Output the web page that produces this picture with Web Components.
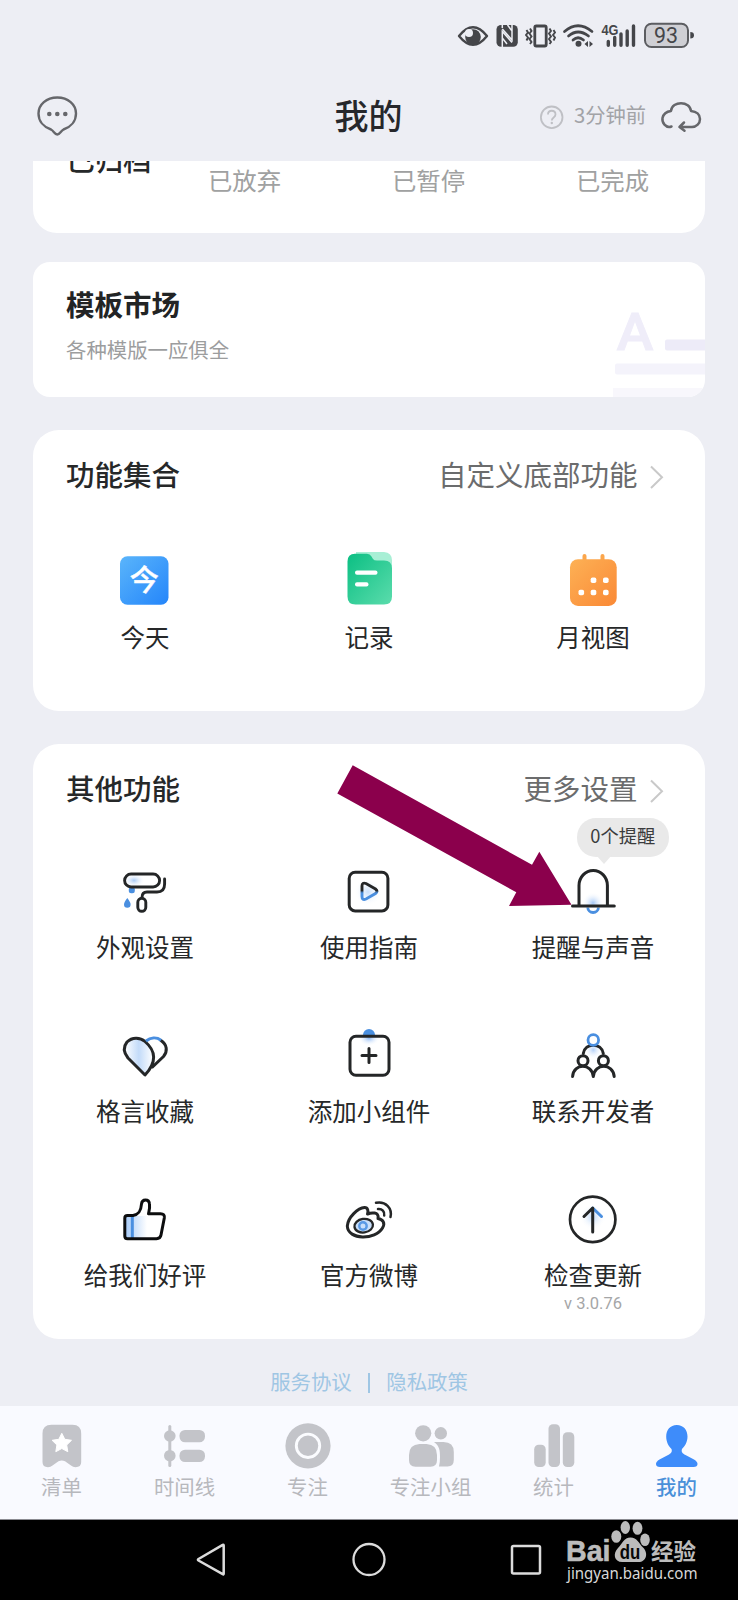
<!DOCTYPE html>
<html lang="zh-CN">
<head>
<meta charset="utf-8">
<title>我的</title>
<style>
html,body{margin:0;padding:0}
body{width:738px;height:1600px;overflow:hidden;background:#edeef4;color:#262829;font-family:"Noto Sans CJK SC",sans-serif}
</style>
</head>
<body>
<mine-page></mine-page>
<script>
const INK = 'fill="none" stroke="#242627" stroke-width="3" stroke-linecap="round" stroke-linejoin="round"';
const BLUE = '#4a8fe0';
// Each entry: [viewBox, markup]
const ICONS = {
  status: ['450 15 250 40', `<g fill="#45464a" stroke="none">
    <path d="M459 36Q473 18.500 487 36Q473 53.500 459 36Z" fill="none" stroke="#45464a" stroke-width="2.400" stroke-linejoin="round"/>
    <circle cx="473" cy="37" r="7.800"/><circle cx="469" cy="33" r="4" fill="#edeef4"/>
    <rect x="496.500" y="25" width="21.300" height="21.800" rx="4.500"/>
    <path d="M502.300 47V31.500L512 42.500M512 24.500V40L502.300 29M502.300 25V28M507.500 25L512 31M502.300 38L507 44" fill="none" stroke="#edeef4" stroke-width="1.500"/>
    <rect x="534.800" y="26" width="11.400" height="20" rx="1.500" fill="none" stroke="#45464a" stroke-width="2.800"/>
    <path d="M530.500 28.500L532 31L530 33.500L532 36.500L530 39L532 42L530.500 44M527 30L528.500 32.500L526.500 35L528.500 37.500L527 40.500M550 28.500L551.500 31L549.500 33.500L551.500 36.500L549.500 39L551.500 42L550 44M554 30L555.500 32.500L553.500 35L555.500 37.500L554 40.500" transform="translate(-.5)" fill="none" stroke="#45464a" stroke-width="1.900"/>
    <path d="M564.500 31.500Q578 20 592 31.500M568.500 36Q578 28 588.500 36M573 40Q578 35.500 583.500 40" fill="none" stroke="#45464a" stroke-width="2.700" stroke-linecap="round"/>
    <circle cx="578.500" cy="43.800" r="3"/><path d="M588 41V47L584.500 44ZM589.500 41V47L593 44Z"/>
    <path d="M608.300 41.500V45.300M614.700 37.500V45.300M621 34V45.300M627.200 31V45.300M633.500 26V45.300" fill="none" stroke="#45464a" stroke-width="3.400" stroke-linecap="round"/>
    <text x="601.500" y="35.300" font-size="14.500" font-weight="700" textLength="17" lengthAdjust="spacingAndGlyphs" font-family="Liberation Sans,sans-serif">4G</text>
    <rect x="645" y="23.700" width="43" height="23.300" rx="6.500" fill="#cfcfd4" stroke="#5c5d61" stroke-width="2"/>
    <path d="M690.300 32Q694 32 694 35.300Q694 38.600 690.300 38.600Z"/>
    <text x="666" y="43.300" font-size="22.500" text-anchor="middle" textLength="24" lengthAdjust="spacingAndGlyphs" font-family="Roboto,sans-serif">93</text></g>`],
  chat: ['33 92 50 50', `<path d="M57.300 97.500C68 97.500 76 104.500 76 113.500C76 121 71 127 63.500 129.500C60.500 131 60 134.500 57.300 134.500C54.500 134.500 54 131 51 129.500C43.500 127 38.500 121 38.500 113.500C38.500 104.500 46.500 97.500 57.300 97.500Z" fill="none" stroke="#66676b" stroke-width="2.400"/><g fill="#66676b"><circle cx="49.300" cy="114" r="2.300"/><circle cx="57.300" cy="114" r="2.300"/><circle cx="65.300" cy="114" r="2.300"/></g>`],
  help: ['539 104 25 25', `<circle cx="551.700" cy="116.300" r="10.800" fill="none" stroke="#bfc0c5" stroke-width="1.800"/><path d="M548 113.500C548 108.500 555.500 108.500 555.500 113.500C555.500 116.500 551.800 116.500 551.800 119.500" fill="none" stroke="#bfc0c5" stroke-width="1.800"/><circle cx="551.800" cy="122" r="1.200" fill="#bfc0c5"/>`],
  cloud: ['658 97 46 38', `<path d="M671.500 125.500C665.500 127.500 661.800 121.500 662.500 117C663.500 112.500 667 110.500 671 110C671.500 104.500 676.500 102.200 681 102.200C686 102.200 690.500 105 691 110C696.500 110.500 700 113.500 700 118C700 122.500 696.500 126 692 126H680M684 121.500L679.500 126L684.500 129.800" fill="none" stroke="#66676b" stroke-width="2.500" stroke-linejoin="round" stroke-linecap="round"/>`],
  chevron: ['648 464 18 26', `<path d="M651 466.500L662 477.300L651 488" fill="none" stroke="#c9c9c9" stroke-width="2"/>`],
  template: ['610 300 95 97', `<text x="635" y="350" font-size="52" font-weight="500" fill="#efedf9" stroke="#efedf9" stroke-width=".8" text-anchor="middle" textLength="37" lengthAdjust="spacingAndGlyphs" font-family="Roboto,sans-serif">A</text>
    <rect x="665" y="339.500" width="42" height="11" rx="2" fill="#edebf8"/><rect x="615" y="363.500" width="92" height="11" rx="2" fill="#f4f3fb"/><rect x="613" y="388" width="94" height="10" fill="#f8f7fc"/>`],
  today: ['115 549.500 60 60', `<defs><linearGradient id="a" x2="1" y2="1"><stop stop-color="#5ab5fb"/><stop offset="1" stop-color="#2485fa"/></linearGradient></defs><rect x="120" y="555.700" width="48.500" height="48.500" rx="7.500" fill="url(#a)"/><text x="144.300" y="590" font-size="29" font-weight="500" fill="#fff" stroke="#fff" stroke-width=".4" text-anchor="middle">今</text>`],
  record: ['339 549.500 60 60', `<defs><linearGradient id="a" x2="1" y2="1"><stop stop-color="#0bbf83"/><stop offset="1" stop-color="#5bdcac"/></linearGradient></defs><path d="M356 551.500H384Q392 552 392 560V580H356Z" fill="#a8efd5"/><path d="M355 553.300H367Q370 553.300 371.500 556L373 558.500Q374 560 377 560H384Q392 560 392 568V596Q392 604 384 604H355.500Q347.500 604 347.500 596V561Q347.500 553.300 355 553.300Z" fill="url(#a)"/><rect x="355" y="570" width="22.500" height="4.200" rx="2" fill="#fff"/><rect x="355" y="581.700" width="13.500" height="4.200" rx="2" fill="#fff"/>`],
  month: ['563 549.500 60 60', `<defs><linearGradient id="a" x2="1" y2="1"><stop stop-color="#fdb155"/><stop offset="1" stop-color="#fa8936"/></linearGradient></defs><path d="M584.500 560V555.500M602.500 560V555.500" stroke="#fba64c" stroke-width="4" stroke-linecap="round"/><rect x="570" y="558.700" width="46.700" height="46.700" rx="8" fill="url(#a)"/><g fill="#fff"><rect x="590.700" y="577" width="5.600" height="5.600" rx="1.800"/><rect x="603" y="577" width="5.600" height="5.600" rx="1.800"/><rect x="578.500" y="589.200" width="5.600" height="5.600" rx="1.800"/><rect x="590.700" y="589.200" width="5.600" height="5.600" rx="1.800"/><rect x="603" y="589.200" width="5.600" height="5.600" rx="1.800"/></g>`],
  roller: ['115 862 60 60', `<defs><radialGradient id="a"><stop stop-color="#a9cbf7"/><stop offset="1" stop-color="#fff" stop-opacity="0"/></radialGradient></defs><ellipse cx="134" cy="880.500" rx="11" ry="7" fill="url(#a)"/><rect x="128.800" y="887" width="6" height="6.200" rx="2.500" fill="${BLUE}"/><path d="M127.300 898Q130.800 902.500 130.600 904.500A3.300 3.300 0 0 1 124 904.500Q124 902 127.300 898Z" fill="${BLUE}"/><g ${INK} style="stroke-width:2.900"><rect x="124.600" y="874" width="35" height="13" rx="6.500"/><path d="M164.600 879V884Q164.600 892 157 892H147Q142 892 142 897.500"/><rect x="137.800" y="898.300" width="8" height="13" rx="4"/></g>`],
  play: ['339 862 60 60', `<defs><linearGradient id="a" x2="0" y2="1"><stop offset=".45" stop-color="#242627"/><stop offset=".6" stop-color="#4a8fe0"/></linearGradient><radialGradient id="b"><stop stop-color="#c9dffb"/><stop offset="1" stop-color="#fff" stop-opacity="0"/></radialGradient></defs><circle cx="368" cy="892" r="14" fill="url(#b)"/><rect x="349.200" y="872.200" width="38.700" height="38.700" rx="6" ${INK}/><path d="M362 886Q362 882 366 883.500L375.500 889Q378.500 891.300 375.500 893.500L366 899Q362 900.700 362 896.500Z" fill="none" stroke="url(#a)" stroke-width="2.900"/>`],
  bell: ['563 862 60 60', `<defs><radialGradient id="a"><stop stop-color="#a5c8f7"/><stop offset="1" stop-color="#fff" stop-opacity="0"/></radialGradient></defs><circle cx="593" cy="903" r="11" fill="url(#a)"/><path d="M587.800 907.500A5.300 5 0 0 0 598.400 907.500" fill="#fff" stroke="${BLUE}" stroke-width="2.800"/><path d="M579 905V885.500A14.200 15 0 0 1 607.400 885.500V905M572.500 906H614.300" ${INK}/>`],
  heart: ['115 1026 60 60', `<defs><linearGradient id="a"><stop stop-color="#fff"/><stop offset=".5" stop-color="#c3dbf9"/><stop offset="1" stop-color="#fff"/></linearGradient></defs><path d="M145 1075L128 1058C124 1053 123 1047 127 1042C132 1037 140 1037 145 1041.500C156 1051 156 1063 145 1075Z" fill="url(#a)"/><path d="M145 1075L128 1058C124 1053 123 1047 127 1042C132 1037 140 1037 145 1041.500C156 1051 157 1062 145 1075ZM161 1040.500C167 1044.500 168 1051 163.500 1056.500L152.500 1067" ${INK}/><path d="M146 1041C150.500 1037.500 156.500 1037 161 1040.200" fill="none" stroke="${BLUE}" stroke-width="3"/>`],
  widget: ['339 1026 60 60', `<defs><radialGradient id="a"><stop stop-color="#8db9f5"/><stop offset="1" stop-color="#fff" stop-opacity="0"/></radialGradient></defs><ellipse cx="369" cy="1038" rx="11" ry="8" fill="url(#a)"/><path d="M363 1035A6 6 0 0 1 375 1035Z" fill="${BLUE}"/><rect x="350" y="1036.200" width="39" height="39" rx="6" ${INK}/><path d="M362 1055.500H376M369 1048.500V1062.500" ${INK}/>`],
  people: ['563 1026 60 60', `<defs><radialGradient id="a"><stop stop-color="#b4d1f8"/><stop offset="1" stop-color="#fff" stop-opacity="0"/></radialGradient></defs><circle cx="593.300" cy="1050" r="9" fill="url(#a)"/><g ${INK}><path d="M583.300 1053.500C585 1042.500 601.500 1042.500 603.300 1053.500M572.600 1076.500C573.500 1062.800 592 1062.800 593.300 1076.500C594.500 1062.800 613 1062.800 614.200 1076.500"/><circle cx="583" cy="1060.700" r="5" fill="#fff"/><circle cx="603.400" cy="1060.700" r="5" fill="#fff"/></g><circle cx="593.300" cy="1040" r="5.300" fill="#fff" stroke="${BLUE}" stroke-width="2.800"/>`],
  thumb: ['115 1190 60 60', `<defs><linearGradient id="a"><stop stop-color="#a9ccf8"/><stop offset="1" stop-color="#fff"/></linearGradient></defs><rect x="126" y="1216" width="21" height="22" fill="url(#a)"/><path d="M132.300 1216V1238" stroke="${BLUE}" stroke-width="3"/><path d="M127.500 1215.500H133C139 1214.500 141 1211 141.500 1204C142 1198.500 149 1198.500 149.500 1204C150 1208 149 1211 148.500 1213.800H160.500Q165 1213.800 164.300 1218L161 1235Q160.300 1238.700 156.500 1238.700H127.500Q124.800 1238.700 124.800 1236V1218Q124.800 1215.500 127.500 1215.500Z" ${INK} style="stroke:#0c0d0e"/>`],
  weibo: ['339 1190 60 60', `<path d="M347.300 1226C348 1217 358 1208 364.500 1207.600C368 1207.500 368.500 1211 367.500 1214C371 1212.500 379.500 1211.500 378 1218.500C383 1219.500 385.500 1223 382.500 1228C375.500 1240 348 1240.500 347.300 1226Z" ${INK}/><ellipse cx="363.700" cy="1225.700" rx="9.300" ry="6.800" fill="#c9dffa" stroke="#242627" stroke-width="2.300" transform="rotate(-8 363.700 1225.700)"/><circle cx="363" cy="1226" r="3.700" fill="none" stroke="#5a9ae6" stroke-width="2.400"/><path d="M376 1202.800C385.500 1200.800 392.500 1208 390.500 1217M378 1209C382 1208.500 385 1211.500 384.200 1215.500" ${INK} style="stroke-width:2.500"/>`],
  update: ['563 1190 60 60', `<defs><radialGradient id="a"><stop stop-color="#bfd9fa"/><stop offset="1" stop-color="#fff" stop-opacity="0"/></radialGradient></defs><circle cx="592.700" cy="1217" r="13" fill="url(#a)"/><circle cx="592.700" cy="1219.400" r="22.700" ${INK} style="stroke-width:2.700"/><path d="M592.700 1208L601.500 1216.500" stroke="${BLUE}" stroke-width="3" stroke-linecap="round"/><path d="M592.700 1232V1208L584 1216.500" ${INK}/>`],
  list: ['38.500 1421 46 50', `<path d="M51 1424.700H72Q80.700 1424.700 80.700 1433.500V1462Q80.700 1467.200 75 1467.200Q72.500 1467.200 70.500 1465.500L64.500 1461.300Q61.300 1459.500 58 1461.300L52 1465.500Q50 1467.200 47.500 1467.200Q42 1467.200 42 1462V1433.500Q42 1424.700 51 1424.700Z" fill="#c3c4c9"/><path d="M61.300 1433.300L64.300 1439.300L71 1440.300L66.200 1445L67.300 1451.700L61.300 1448.500L55.300 1451.700L56.400 1445L51.600 1440.300L58.300 1439.300Z" fill="#fff" stroke="#fff" stroke-width="1" stroke-linejoin="round"/>`],
  timeline: ['161.500 1421 46 50', `<g fill="#c3c4c9"><rect x="167.800" y="1425" width="3" height="42" rx="1.500"/><circle cx="169.300" cy="1436" r="5.800"/><circle cx="169.300" cy="1455.700" r="5.800"/><rect x="179" y="1430" width="25.500" height="12.300" rx="5.500"/><rect x="179" y="1449.700" width="25.500" height="12.300" rx="5.500"/></g>`],
  focus: ['284.500 1421 46 50', `<circle cx="307.500" cy="1445.800" r="22.600" fill="#c3c4c9"/><circle cx="307.500" cy="1445.800" r="11.700" fill="none" stroke="#fbfcff" stroke-width="2.900"/>`],
  group: ['407.500 1421 46 50', `<g fill="#c3c4c9"><circle cx="422.700" cy="1433.300" r="8.100"/><circle cx="440.300" cy="1433.300" r="6.200"/><path d="M419 1444H426Q436.500 1444.500 436.500 1455V1460Q436.500 1466.700 430 1466.700H415Q408.500 1466.700 408.500 1460V1455Q408.500 1444.500 419 1444Z"/><path d="M433.500 1442H443Q453.300 1442 453.300 1452V1460Q453.300 1466.500 447 1466.500H438.500Q439.500 1463 439.500 1457C439.500 1450 439 1446 433.500 1442Z"/></g>`],
  stats: ['530.500 1421 46 50', `<g fill="#c3c4c9"><rect x="533.700" y="1444.700" width="11.500" height="22.300" rx="4.500"/><rect x="548" y="1424.300" width="11.500" height="42.700" rx="4.500"/><rect x="562.300" y="1432.300" width="11.500" height="34.700" rx="4.500"/></g>`],
  me: ['653.500 1421 48 50', `<path d="M677.300 1425C684 1425 688 1430 688 1436.500C688 1442 685.500 1446 682.500 1449C681.500 1452 683 1453.500 686 1455L694.500 1459.500Q698 1461.500 698 1464Q698 1467 694 1467H660.500Q656.500 1467 656.500 1464Q656.500 1461.500 660 1459.500L668.600 1455C671.500 1453.500 673 1452 672 1449C669 1446 666.700 1442 666.700 1436.500C666.700 1430 670.700 1425 677.300 1425Z" fill="#3e8cfa"/>`],
  back: ['191 1540 40 40', `<path d="M223.700 1545.500V1573.700Q223.700 1574.800 222.700 1574.200L198.500 1560.500Q197.300 1559.700 198.500 1559L222.700 1544.800Q223.700 1544.300 223.700 1545.500Z" fill="none" stroke="#dcdcdc" stroke-width="2.500"/>`],
  home: ['349 1540 40 40', `<circle cx="369" cy="1559.500" r="15.500" fill="none" stroke="#dcdcdc" stroke-width="2.300"/>`],
  recent: ['506 1540 40 40', `<rect x="512" y="1546" width="28" height="27.500" rx="1.500" fill="none" stroke="#dcdcdc" stroke-width="2.500"/>`],
  baidu: ['562 1520 142 70', `<g fill="#bcbcbc"><text x="566" y="1561" font-size="29.500" font-weight="700" textLength="44.500" lengthAdjust="spacingAndGlyphs" stroke="#bcbcbc" stroke-width=".6" font-family="Liberation Sans,sans-serif">Bai</text><ellipse cx="616.300" cy="1536.500" rx="5" ry="6.300"/><ellipse cx="625.300" cy="1527.500" rx="4.700" ry="6.500"/><ellipse cx="637.500" cy="1528.300" rx="4.900" ry="6.500"/><ellipse cx="645" cy="1539.700" rx="4.800" ry="6.300"/><path d="M630.500 1537.500C637 1537.500 639 1543.500 643 1547.500C649 1553.500 646 1562.500 638 1562H623C614 1562.500 612.500 1553.500 618 1548C622 1544 624 1537.500 630.500 1537.500Z"/><text x="630" y="1558.500" font-size="19.500" font-weight="700" fill="#080808" text-anchor="middle" textLength="20.500" lengthAdjust="spacingAndGlyphs" font-family="Liberation Sans,sans-serif">du</text><text x="651" y="1559.500" font-size="23" font-weight="700" textLength="45" lengthAdjust="spacingAndGlyphs">经验</text></g><text x="567" y="1579.300" font-size="16.500" fill="#d8d8d8" textLength="130.500" lengthAdjust="spacingAndGlyphs" font-family="Noto Sans,sans-serif">jingyan.baidu.com</text>`],
  arrow: ['337 765 235 142', `<path d="M352.700 765.300L532 864.700L539.300 851.700L571.500 904.700L509 906L516.300 892.300L337.300 793.500Z" fill="#8b004c"/>`]
};

const define = (name, html) => {
  customElements.define(name, class extends HTMLElement {
    connectedCallback() {
      if (this.shadowRoot) return;
      const t = document.createElement('template');
      t.innerHTML = typeof html === 'function' ? html(this) : html;
      this.attachShadow({ mode: 'open' }).append(t.content.cloneNode(true));
    }
  });
};

define('ui-icon', el => {
  const [vb, art] = ICONS[el.getAttribute('name')];
  const [, , w, h] = vb.split(' ');
  return `<style>:host{display:block;flex:none;width:${w}px;height:${h}px}svg{display:block;overflow:visible}</style><svg width="${w}" height="${h}" viewBox="${vb}">${art}</svg>`;
});

define('top-bar', `<style>
  :host{display:block;height:161px;box-sizing:border-box;padding-top:15px}
  .status{display:flex;justify-content:flex-end;padding-right:38px}
  .bar{display:grid;grid-template-columns:1fr auto 1fr;align-items:center;height:50px;margin-top:37px;padding:0 34px 0 33px}
  h1{margin:-5px 0 0;font-size:34px;line-height:50px;font-weight:500;color:#26272b}
  .sync{display:flex;align-items:center;justify-content:flex-end}
  .sync span{font-size:20.300px;line-height:30px;color:#a2a3a7;margin:-6px 12px 0 10px}
  </style><div class="status"><ui-icon name="status"></ui-icon></div>
  <div class="bar"><ui-icon name="chat"></ui-icon><h1><slot></slot></h1><div class="sync"><ui-icon name="help"></ui-icon><span>3分钟前</span><ui-icon name="cloud"></ui-icon></div></div>`);

define('archive-card', `<style>
  :host{display:grid;grid-template-columns:119.500px 184px 184px 184px;height:72px;background:#fff;border-radius:0 0 24px 24px;overflow:hidden;white-space:nowrap}
  b{font-weight:500;font-size:28.300px;line-height:40px;margin:-22px 0 0 33.500px}
  </style><b>已归档</b><slot></slot>`);
define('archive-stat', `<style>:host{display:block;text-align:center;font-size:24.400px;line-height:36px;color:#a0a1a1;padding-top:.5px}</style><slot></slot>`);

define('market-card', `<style>
  :host{display:flex;justify-content:space-between;height:135px;background:#fff;border-radius:17px;overflow:hidden}
  .t{padding:22px 0 0 33px}
  h2{margin:0;font-size:28.500px;line-height:40px;font-weight:700;color:#222425}
  p{margin:10px 0 0;font-size:20.400px;line-height:30px;color:#9c9d9e}
  ui-icon{align-self:flex-end}
  </style><div class="t"><h2><slot></slot></h2><p><slot name="sub"></slot></p></div><ui-icon name="template"></ui-icon>`);

define('feature-card', `<style>
  :host{display:block;background:#fff;border-radius:26px;box-sizing:border-box}
  header{display:flex;align-items:center;padding:24px 39px 0 33px;height:40px}
  h2{margin:0;font-size:28.500px;line-height:40px;font-weight:500;color:#262829}
  .more{margin-left:auto;margin-right:10.500px;font-size:28.500px;line-height:40px;color:#6b6c6d}
  ui-icon{margin-top:5px}
  .grid{display:grid;grid-template-columns:repeat(3,1fr);padding-top:var(--grid-top)}
  </style><header><h2><slot name="title"></slot></h2><span class="more"><slot name="more"></slot></span><ui-icon name="chevron"></ui-icon></header><div class="grid"><slot></slot></div>`);

define('feature-tile', el => `<style>
  :host{display:flex;flex-direction:column;align-items:center;position:relative;height:var(--tile-height,auto)}
  .l{font-size:24.500px;line-height:30px;margin-top:var(--label-gap);white-space:nowrap}
  .n{font:16.500px/20px Roboto,sans-serif;color:#a5a6a7;margin-top:4.500px}
  </style><ui-icon name="${el.getAttribute('icon')}"></ui-icon><span class="l"><slot></slot></span>${el.hasAttribute('note') ? `<span class="n">${el.getAttribute('note')}</span>` : ''}<slot name="tip"></slot>`);

define('tip-bubble', `<style>
  :host{position:absolute;left:96px;top:-44px;width:91.500px;height:38.500px;border-radius:19px;background:#e9e9e9;text-align:center;font-size:18.300px;line-height:35px;color:#3b3c3d;white-space:nowrap}
  i{position:absolute;left:19px;top:37px;border:8px solid transparent;border-bottom:0;border-top:9px solid #e9e9e9}
  </style><slot></slot><i></i>`);

define('legal-links', `<style>
  :host{display:flex;justify-content:center;height:67px;box-sizing:border-box;padding-top:26px;font-size:20.400px;line-height:32px;color:#9fc6e4}
  i{width:2px;height:20px;background:#9fc6e4;margin:8px 16.500px 0 16px}
  </style><slot name="a"></slot><i></i><slot name="b"></slot>`);

define('tab-bar', `<style>:host{display:grid;grid-template-columns:repeat(6,1fr);height:114px;background:#f9faff;box-sizing:border-box;padding-top:15px;border-bottom:1px solid #8b8b91}</style><slot></slot>`);
define('tab-item', el => `<style>
  :host{display:flex;flex-direction:column;align-items:center;font-size:20.400px;line-height:31px;color:${el.hasAttribute('active') ? '#4a90d9' : '#b7b8bd'};font-weight:${el.hasAttribute('active') ? 500 : 400}}
  </style><ui-icon name="${el.getAttribute('icon')}"></ui-icon><slot></slot>`);

define('system-nav', `<style>
  :host{display:flex;height:80px;background:#000}
  ui-icon{margin-top:20px}
  ui-icon:nth-of-type(1){margin-left:191px}
  ui-icon:nth-of-type(2){margin-left:118px}
  ui-icon:nth-of-type(3){margin-left:117px}
  ui-icon:nth-of-type(4){margin:0 0 0 16px}
  </style><ui-icon name="back"></ui-icon><ui-icon name="home"></ui-icon><ui-icon name="recent"></ui-icon><ui-icon name="baidu"></ui-icon>`);

define('mine-page', `<style>
  :host{display:flex;flex-direction:column;position:relative;width:738px;height:1600px;background:#edeef4}
  main{display:flex;flex-direction:column;padding:0 33px}
  market-card{margin-top:29px}
  .set{margin-top:33px;height:281px;--grid-top:55.500px;--label-gap:12.500px}
  .other{margin-top:33px;height:595px;--grid-top:54px;--label-gap:9.500px;--tile-height:164px}
  .pointer{position:absolute;left:337px;top:765px}
  </style>
  <top-bar>我的</top-bar>
  <main>
    <archive-card><archive-stat>已放弃</archive-stat><archive-stat>已暂停</archive-stat><archive-stat>已完成</archive-stat></archive-card>
    <market-card>模板市场<span slot="sub">各种模版一应俱全</span></market-card>
    <feature-card class="set"><span slot="title">功能集合</span><span slot="more">自定义底部功能</span>
      <feature-tile icon="today">今天</feature-tile><feature-tile icon="record">记录</feature-tile><feature-tile icon="month">月视图</feature-tile>
    </feature-card>
    <feature-card class="other"><span slot="title">其他功能</span><span slot="more">更多设置</span>
      <feature-tile icon="roller">外观设置</feature-tile><feature-tile icon="play">使用指南</feature-tile><feature-tile icon="bell">提醒与声音<tip-bubble slot="tip">0个提醒</tip-bubble></feature-tile>
      <feature-tile icon="heart">格言收藏</feature-tile><feature-tile icon="widget">添加小组件</feature-tile><feature-tile icon="people">联系开发者</feature-tile>
      <feature-tile icon="thumb">给我们好评</feature-tile><feature-tile icon="weibo">官方微博</feature-tile><feature-tile icon="update" note="v 3.0.76">检查更新</feature-tile>
    </feature-card>
  </main>
  <legal-links><span slot="a">服务协议</span><span slot="b">隐私政策</span></legal-links>
  <tab-bar><tab-item icon="list">清单</tab-item><tab-item icon="timeline">时间线</tab-item><tab-item icon="focus">专注</tab-item><tab-item icon="group">专注小组</tab-item><tab-item icon="stats">统计</tab-item><tab-item icon="me" active>我的</tab-item></tab-bar>
  <system-nav></system-nav>
  <ui-icon class="pointer" name="arrow"></ui-icon>`);
</script>
</body>
</html>
